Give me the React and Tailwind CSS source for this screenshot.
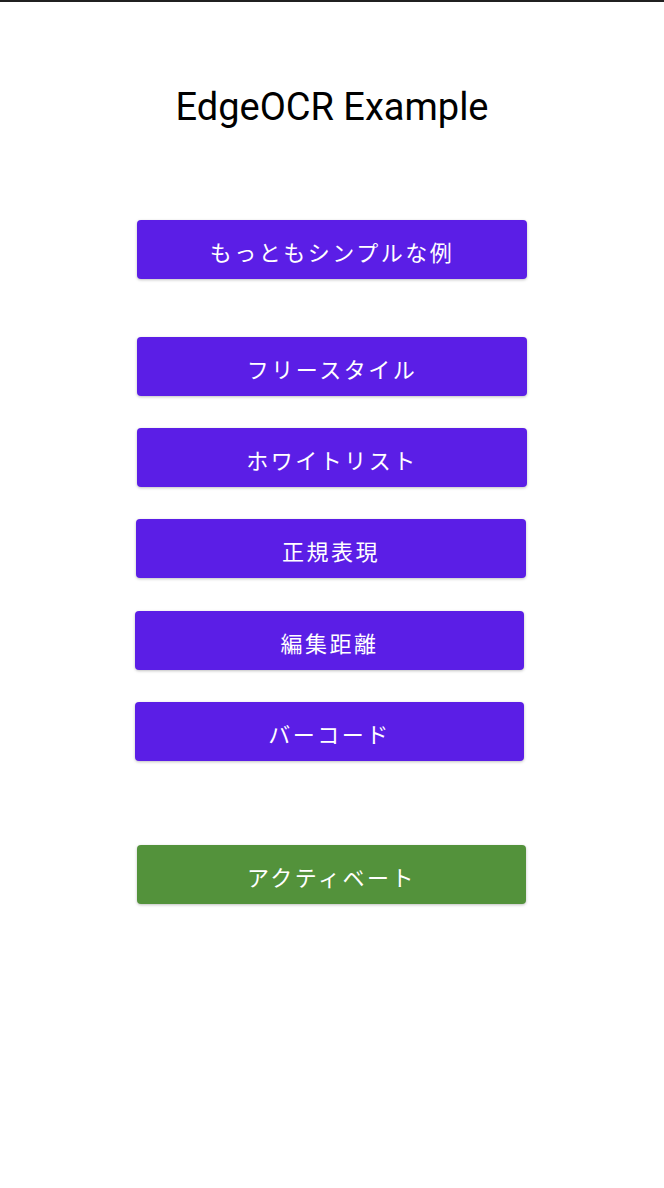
const buttons = [
  { label: 'もっともシンプルな例', cls: 'mt-[92px] ml-[137px] w-[390px]' },
  { label: 'フリースタイル', cls: 'mt-[58px] ml-[137px] w-[390px]' },
  { label: 'ホワイトリスト', cls: 'mt-[32px] ml-[137px] w-[390px]' },
  { label: '正規表現', cls: 'mt-[32px] ml-[136px] w-[390px]' },
  { label: '編集距離', cls: 'mt-[33px] ml-[135px] w-[389px]' },
  { label: 'バーコード', cls: 'mt-[32px] ml-[135px] w-[389px]' },
];

const MenuButton = ({ label, className, color }) => (
  <button
    type="button"
    className={`${className} ${color} flex h-[59px] items-center justify-center rounded-[4px] pt-[3px] text-[22px] leading-none tracking-[2.5px] text-white shadow-[0_1px_3px_rgba(0,0,0,0.25)]`}
    style={{ fontFamily: '"Noto Sans CJK JP", "Noto Sans", sans-serif' }}
  >
    {label}
  </button>
);

export default function App() {
  return (
    <div className="w-[664px] h-[1188px] bg-white overflow-hidden">
      <div className="h-[2px] bg-[#202020]" />
      <h1
        className="mt-[84px] text-center text-[38px] leading-[42px] font-normal text-black"
        style={{ fontFamily: 'Roboto, "Liberation Sans", sans-serif' }}
      >
        EdgeOCR Example
      </h1>
      <div className="flex flex-col">
        {buttons.map((b) => (
          <MenuButton key={b.label} label={b.label} className={b.cls} color="bg-[#5b1ee6]" />
        ))}
        <MenuButton label="アクティベート" className="mt-[84px] ml-[137px] w-[389px]" color="bg-[#53923b]" />
      </div>
    </div>
  );
}
